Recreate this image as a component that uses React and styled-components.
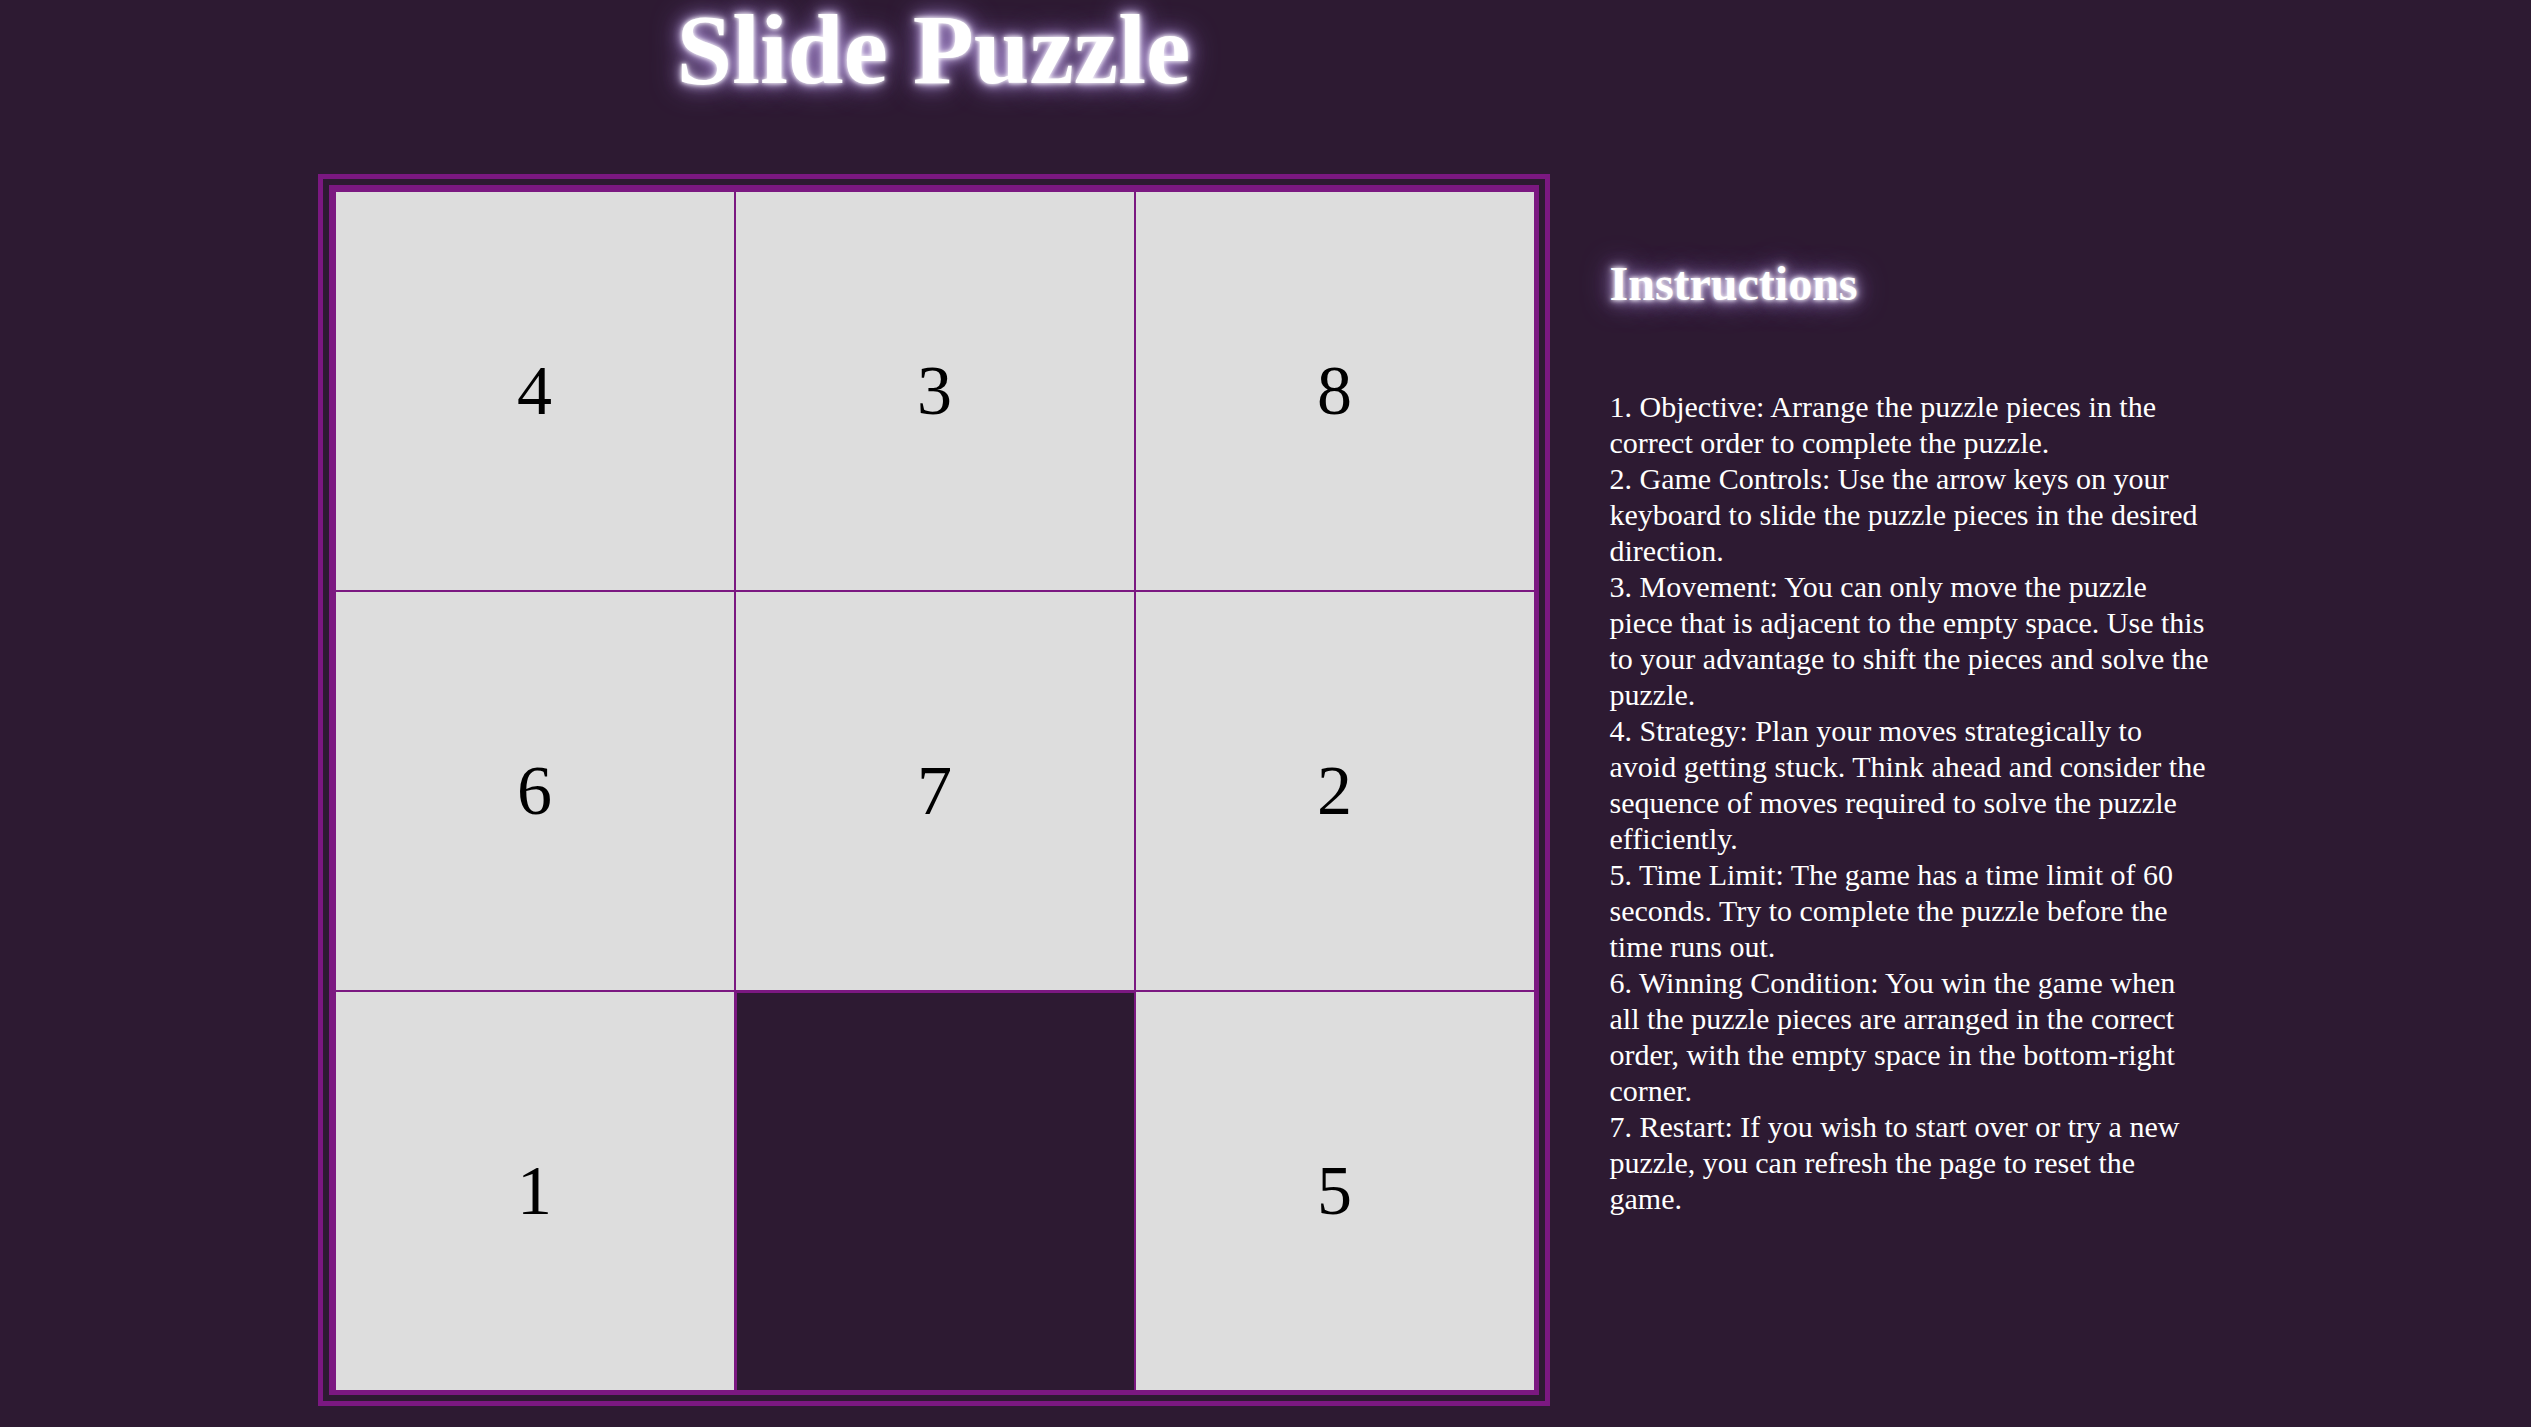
import React from 'react';
import styled, { createGlobalStyle } from 'styled-components';

const GlobalStyle = createGlobalStyle`
  html, body { margin: 0; padding: 0; background: #2d1a32; }
  body { font-family: "Liberation Serif", "Times New Roman", serif; color: #fff; }
`;

const PURPLE = '#7b1881';
const glow = '0 0 4px #fff, 0 0 10px #e2d6f4, 0 0 18px #ac8fd6, 0 0 30px #8a6abb';

const Page = styled.div`
  min-height: 1427px; display: flex; justify-content: center; align-items: flex-start; gap: 60px;
`;
const GameColumn = styled.div`display: flex; flex-direction: column; align-items: center;`;
const Title = styled.h1`
  margin: 0 0 74px; font-size: 100px; line-height: 1; font-weight: bold; color: #fff;
  text-shadow: ${glow};
`;
const Frame = styled.div`border: 5px solid ${PURPLE}; padding: 6px;`;
const Board = styled.div`
  display: grid; grid-template-columns: repeat(3, 400px); grid-auto-rows: 400px;
  border-style: solid; border-color: ${PURPLE}; border-width: 6px 4px 4px 6px;
`;
const Tile = styled.div`
  box-sizing: border-box; border: 1px solid ${PURPLE};
  background: ${p => p.empty ? '#2d1a32' : '#dddddd'};
  border-width: ${p => p.empty ? '2px 1px 1px 2px' : '1px'};
  display: flex; align-items: center; justify-content: center;
  font-size: 70px; color: #000;
`;
const Side = styled.aside`width: 600px; padding-top: 256px; margin-right: 4px;`;
const Heading = styled.h2`
  margin: 0 0 78px; font-size: 48px; font-weight: bold; color: #fff; text-shadow: ${glow};
`;
const Steps = styled.div`font-size: 30px; line-height: 36px; color: #fff;`;

const tiles = [4, 3, 8, 6, 7, 2, 1, null, 5];

const steps = [
  '1. Objective: Arrange the puzzle pieces in the correct order to complete the puzzle.',
  '2. Game Controls: Use the arrow keys on your keyboard to slide the puzzle pieces in the desired direction.',
  '3. Movement: You can only move the puzzle piece that is adjacent to the empty space. Use this to your advantage to shift the pieces and solve the puzzle.',
  '4. Strategy: Plan your moves strategically to avoid getting stuck. Think ahead and consider the sequence of moves required to solve the puzzle efficiently.',
  '5. Time Limit: The game has a time limit of 60 seconds. Try to complete the puzzle before the time runs out.',
  '6. Winning Condition: You win the game when all the puzzle pieces are arranged in the correct order, with the empty space in the bottom-right corner.',
  '7. Restart: If you wish to start over or try a new puzzle, you can refresh the page to reset the game.',
];

const App = () => (
  <>
    <GlobalStyle />
    <Page>
      <GameColumn>
        <Title>Slide Puzzle</Title>
        <Frame>
          <Board>
            {tiles.map((t, i) => <Tile key={i} empty={t === null}>{t}</Tile>)}
          </Board>
        </Frame>
      </GameColumn>
      <Side>
        <Heading>Instructions</Heading>
        <Steps>
          {steps.map(s => <div key={s}>{s}</div>)}
        </Steps>
      </Side>
    </Page>
  </>
);

export default App;
